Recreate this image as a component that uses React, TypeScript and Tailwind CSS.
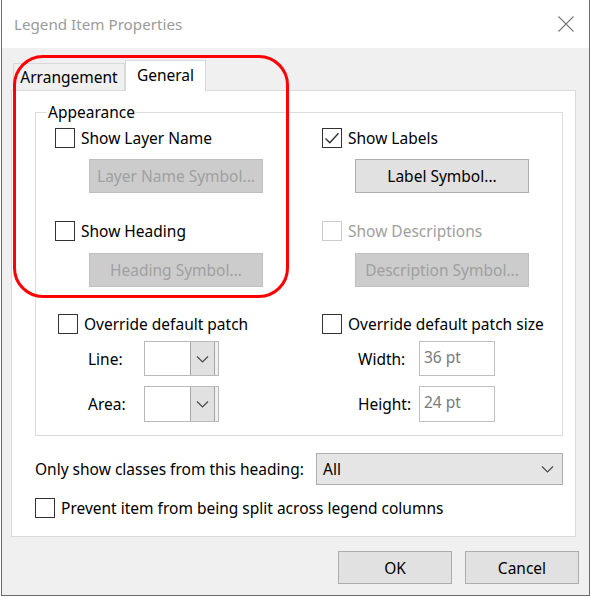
import React from "react";

function Check({ checked = false, disabled = false }: { checked?: boolean; disabled?: boolean }) {
  return (
    <span
      className={
        disabled
          ? "flex h-[20px] w-[20px] shrink-0 items-center justify-center border border-[#cccccc] bg-white"
          : "flex h-[20px] w-[20px] shrink-0 items-center justify-center border border-[#333333] bg-white"
      }
    >
      {checked && (
        <svg width="18" height="18" viewBox="0 0 18 18">
          <path d="M2.5 9.5 L6.8 13.8 L15.5 4.2" fill="none" stroke="#2b2b2b" strokeWidth="1.3" />
        </svg>
      )}
    </span>
  );
}

function CheckRow({
  label,
  checked = false,
  disabled = false,
  className = "",
}: {
  label: string;
  checked?: boolean;
  disabled?: boolean;
  className?: string;
}) {
  return (
    <div className={"flex items-center gap-[6px] " + className}>
      <Check checked={checked} disabled={disabled} />
      <span className={disabled ? "whitespace-nowrap text-[#a0a0a0]" : "whitespace-nowrap"}>{label}</span>
    </div>
  );
}

function Btn({ label, disabled = false, className = "" }: { label: string; disabled?: boolean; className?: string }) {
  return (
    <div
      className={
        (disabled
          ? "flex h-[34px] w-[174px] items-center justify-center border border-[#bfbfbf] bg-[#cccccc] text-[#a0a0a0] "
          : "flex h-[34px] w-[174px] items-center justify-center border border-[#adadad] bg-[#e1e1e1] ") + className
      }
    >
      <span className="whitespace-nowrap">{label}</span>
    </div>
  );
}

function Chevron() {
  return (
    <svg width="13" height="8" viewBox="0 0 13 8">
      <path d="M1 1.5 L6.5 7 L12 1.5" fill="none" stroke="#4a4a4a" strokeWidth="1.2" />
    </svg>
  );
}

function Combo() {
  return (
    <div className="flex h-full w-[75px] border border-[#b9b9b9] bg-white">
      <div className="flex-1 bg-white" />
      <div className="flex w-[25px] items-center justify-center border-l border-r border-[#a6a6a6] bg-[#e1e1e1]">
        <Chevron />
      </div>
      <div className="w-[3px] bg-[#f0f0f0]" />
    </div>
  );
}

function TextBox({ value }: { value: string }) {
  return (
    <div className="h-full w-[76px] border border-[#bfbfbf] bg-white pl-[4px] pt-[4px] leading-[22px] text-[#7a7a7a]">
      {value}
    </div>
  );
}

export default function App() {
  return (
    <div className="relative h-[597px] w-[591px] overflow-hidden bg-white font-['Noto_Sans',sans-serif] text-[15.5px] leading-[20px] text-black">
      <div className="ml-[1px] flex h-[596px] w-[589px] flex-col border border-t-0 border-[#6b6b6b]">
        {/* Title bar */}
        <div className="flex h-[48px] shrink-0 items-center justify-between bg-white pl-[12px] pr-[15px]">
          <span className="text-[15.2px] text-[#9b9b9b]">Legend Item Properties</span>
          <svg width="16" height="16" viewBox="0 0 16 16">
            <path d="M0.5 0.5 L15.5 15.5 M15.5 0.5 L0.5 15.5" stroke="#777777" strokeWidth="1.1" />
          </svg>
        </div>

        {/* Body */}
        <div className="flex flex-1 flex-col bg-[#f0f0f0] pl-[9px] pt-[12px]">
          {/* Tabs */}
          <div className="relative z-10 flex h-[30px] items-end pl-[2px]">
            <div className="flex h-[27px] w-[112px] items-center justify-center border border-b-0 border-[#d9d9d9] bg-[#f0f0f0]">
              Arrangement
            </div>
            <div className="mb-[-1px] flex h-[31px] w-[81px] items-center justify-center border border-b-0 border-[#d9d9d9] bg-white pb-[2px]">
              General
            </div>
          </div>

          {/* Panel */}
          <div className="h-[447px] w-[565px] border border-[#d9d9d9] bg-white pl-[23px] pt-[21px]">
            {/* Group box */}
            <div className="relative h-[324px] w-[528px] border border-[#dcdcdc] pl-[19px]">
              <span className="absolute left-[11px] top-[-12px] bg-white px-[1px] leading-[22px]">Appearance</span>

              <div className="mt-[15px] grid h-[20px] grid-cols-[267px_1fr] items-center">
                <CheckRow label="Show Layer Name" />
                <CheckRow label="Show Labels" checked />
              </div>

              <div className="mt-[11px] grid h-[34px] grid-cols-[267px_1fr]">
                <Btn label="Layer Name Symbol..." disabled className="ml-[34px]" />
                <Btn label="Label Symbol..." className="ml-[33px]" />
              </div>

              <div className="mt-[28px] grid h-[20px] grid-cols-[267px_1fr] items-center">
                <CheckRow label="Show Heading" />
                <CheckRow label="Show Descriptions" disabled />
              </div>

              <div className="mt-[12px] grid h-[34px] grid-cols-[267px_1fr]">
                <Btn label="Heading Symbol..." disabled className="ml-[34px]" />
                <Btn label="Description Symbol..." disabled className="ml-[33px]" />
              </div>

              <div className="mt-[27px] grid h-[20px] grid-cols-[267px_1fr] items-center">
                <CheckRow label="Override default patch" className="ml-[3px]" />
                <CheckRow label="Override default patch size" />
              </div>

              <div className="mt-[7px] grid h-[35px] grid-cols-[267px_1fr]">
                <div className="flex h-full items-center">
                  <span className="ml-[33px] w-[56px]">Line:</span>
                  <Combo />
                </div>
                <div className="flex h-full items-center">
                  <span className="ml-[36px] w-[61px]">Width:</span>
                  <TextBox value="36 pt" />
                </div>
              </div>

              <div className="mt-[10px] grid h-[36px] grid-cols-[267px_1fr]">
                <div className="flex h-full items-center">
                  <span className="ml-[33px] w-[56px]">Area:</span>
                  <Combo />
                </div>
                <div className="flex h-full items-center">
                  <span className="ml-[36px] w-[61px]">Height:</span>
                  <TextBox value="24 pt" />
                </div>
              </div>
            </div>

            {/* Only show classes */}
            <div className="mt-[17px] flex h-[32px] items-center">
              <span className="w-[281px] whitespace-nowrap">Only show classes from this heading:</span>
              <div className="flex h-full w-[247px] items-center justify-between border border-[#adadad] bg-[#e5e5e5] pl-[6px] pr-[8px]">
                <span>All</span>
                <Chevron />
              </div>
            </div>

            {/* Prevent */}
            <div className="mt-[13px] flex h-[20px] items-center">
              <CheckRow label="Prevent item from being split across legend columns" />
            </div>
          </div>

          {/* OK / Cancel */}
          <div className="mt-[14px] flex justify-end gap-[13px] pr-[10px]">
            <div className="flex h-[33px] w-[114px] items-center justify-center border border-[#adadad] bg-[#e1e1e1]">OK</div>
            <div className="flex h-[33px] w-[114px] items-center justify-center border border-[#adadad] bg-[#e1e1e1]">Cancel</div>
          </div>
        </div>
      </div>

      {/* Red annotation */}
      <div className="pointer-events-none absolute left-[13px] top-[55px] z-20 h-[243px] w-[276px] rounded-[30px] border-[3px] border-[#ff0000]" />
    </div>
  );
}
